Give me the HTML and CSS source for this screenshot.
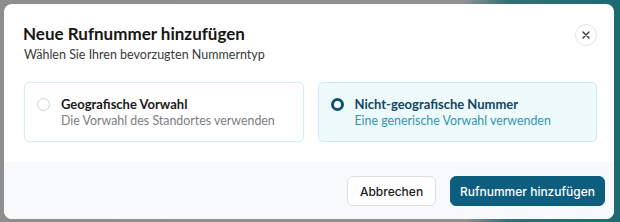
FILE: index.html
```
<!DOCTYPE html>
<html lang="de">
<head>
<meta charset="utf-8">
<link rel="stylesheet" href="styles.css">
</head>
<body>
<div class="backdrop">
  <div class="modal">
    <div class="modal-body">
      <div class="header">
        <div class="titles">
          <h1 class="title">Neue Rufnummer hinzufügen</h1>
          <p class="subtitle">Wählen Sie Ihren bevorzugten Nummerntyp</p>
        </div>
        <button class="close" aria-label="Schließen">
          <svg width="10" height="10" viewBox="0 0 10 10"><path d="M2 2 L8 8 M8 2 L2 8" stroke="#333" stroke-width="1.4" stroke-linecap="round"/></svg>
        </button>
      </div>
      <div class="options">
        <label class="option">
          <span class="radio"></span>
          <span class="option-text">
            <span class="option-title">Geografische Vorwahl</span>
            <span class="option-desc">Die Vorwahl des Standortes verwenden</span>
          </span>
        </label>
        <label class="option selected">
          <span class="radio"></span>
          <span class="option-text">
            <span class="option-title">Nicht-geografische Nummer</span>
            <span class="option-desc">Eine generische Vorwahl verwenden</span>
          </span>
        </label>
      </div>
    </div>
    <div class="footer">
      <button class="btn btn-secondary">Abbrechen</button>
      <button class="btn btn-primary">Rufnummer hinzufügen</button>
    </div>
  </div>
</div>
</body>
</html>
```
FILE: styles.css
```
* { box-sizing: border-box; }
html, body { margin: 0; padding: 0; }
body {
  width: 620px;
  height: 222px;
  overflow: hidden;
  font-family: "Lato", "Liberation Sans", sans-serif;
  background: linear-gradient(90deg, #8e8e8e 0%, #909090 75%, #2f6f78 82%, #1d6a73 100%);
}
.backdrop {
  padding: 4px 6px 3px 4px;
  height: 222px;
}
.modal {
  background: #fff;
  border-radius: 8px;
  overflow: hidden;
  height: 215px;
  display: flex;
  flex-direction: column;
}
.modal-body {
  padding: 20px 17px 20px 20px;
  flex: 0 0 auto;
}
.header {
  display: flex;
  justify-content: space-between;
  align-items: flex-start;
}
.title {
  margin: 0 0 0 -1px;
  font-size: 17px;
  font-weight: 700;
  color: #161616;
  line-height: 20px;
}
.subtitle {
  margin: 3px 0 0;
  font-size: 12.5px;
  color: #3a3a3a;
  line-height: 16px;
}
.close {
  width: 22px;
  height: 22px;
  border-radius: 50%;
  border: 1px solid #e2e4e8;
  background: #fff;
  display: flex;
  align-items: center;
  justify-content: center;
  padding: 0;
  margin-top: 0;
}
.options {
  display: grid;
  grid-template-columns: 1fr 1fr;
  gap: 14px;
  margin-top: 19px;
}
.option {
  display: flex;
  align-items: flex-start;
  gap: 11px;
  border: 1px solid #d3eff6;
  border-radius: 5px;
  padding: 13px 14px 13px 12px;
  height: 60px;
  white-space: nowrap;
}
.option.selected {
  background: #effafd;
  border-color: #c9ecf5;
}
.radio {
  width: 13px;
  height: 13px;
  border-radius: 50%;
  border: 1px solid #cfd3da;
  background: #fff;
  margin-top: 2px;
  flex: 0 0 auto;
}
.option.selected .radio {
  border: 3.5px solid #0e5272;
  background: #fff;
}
.option-text {
  display: flex;
  flex-direction: column;
}
.option-title {
  font-size: 13px;
  font-weight: 700;
  color: #1a1a1a;
  line-height: 16px;
}
.option-desc {
  font-size: 12.4px;
  color: #7a7d82;
  line-height: 16px;
  margin-top: 1px;
}
.option.selected .option-title { color: #0f4761; }
.option.selected .option-desc { color: #2f96b1; }
.footer {
  flex: 1 1 auto;
  background: #f8f9fb;
  display: flex;
  justify-content: flex-end;
  align-items: flex-start;
  gap: 14px;
  padding: 14px 9px 0 0;
}
.btn {
  height: 30px;
  border-radius: 6px;
  font-family: "Inter", "Liberation Sans", sans-serif;
  font-size: 12px;
  font-weight: 500;
  padding: 0;
  white-space: nowrap;
}
.btn-secondary {
  width: 89px;
  background: #fff;
  border: 1px solid #dcdfe4;
  color: #1a1a1a;
}
.btn-primary {
  width: 155px;
  background: #0c5d7e;
  border: 1px solid #0c5d7e;
  color: #fff;
}
```
